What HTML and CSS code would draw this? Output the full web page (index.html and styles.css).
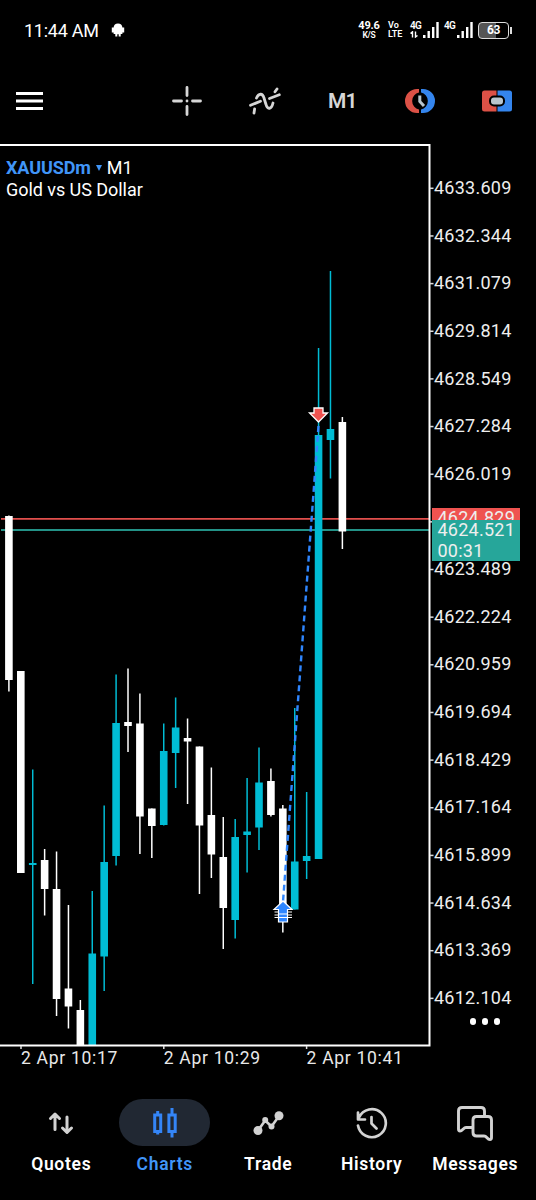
FILE: index.html
```html
<!DOCTYPE html>
<html lang="en">
<head>
  <meta charset="UTF-8">
  <title>Charts</title>
  <link rel="stylesheet" href="styles.css">
</head>
<body>
  <div class="app">
    <header class="status-bar">
      <span class="time">11:44 AM</span>
      <svg class="android" width="14" height="14" viewBox="0 0 14 14" fill="#fff">
        <path d="M2.600 4.500Q3 .5 7 .5T11.400 4.500V11H9.700V13.500H7.700V11.300H6.300V13.500H4.300V11H2.600zM.8 4.500H3V9.500H.8zM11 4.500H13.200V9.500H11z"/>
      </svg>
      <div class="speed"><b>49.6</b><small>K/S</small></div>
      <div class="volte"><span>Vo</span><span>LTE</span></div>
      <div class="network">
        <div class="net-type">
          <span>4G</span>
          <svg width="9" height="7" viewBox="0 0 9 7" fill="none" stroke="#fff" stroke-width="1.4"><path d="M2.500 6.500V.8L.5 2.500M5.500 .5V6L7.500 4.500"/></svg>
        </div>
        <svg width="16" height="16" viewBox="0 0 16 16" fill="#fff"><path d="M0 13h2.500v3H0zM4.500 9h2.400v7H4.500zM9 5h2.400v11H9zM13.300 0h2.400v16h-2.400z"/></svg>
      </div>
      <div class="network second">
        <div class="net-type"><span>4G</span></div>
        <svg width="16" height="16" viewBox="0 0 16 16" fill="#fff"><path d="M0 13h2.500v3H0zM4.500 9h2.400v7H4.500zM9 5h2.400v11H9zM13.300 0h2.400v16h-2.400z"/></svg>
      </div>
      <div class="battery">63</div>
    </header>

    <nav class="toolbar">
      <button class="tool">
        <svg width="28" height="20" viewBox="0 0 28 20" fill="#fff"><path d="M0 1h27v3H0zM0 8.500h27v3H0zM0 16h27v3H0z"/></svg>
      </button>
      <button class="tool">
        <svg width="32" height="32" viewBox="0 0 32 32" fill="none" stroke="#d6d6d6" stroke-width="2.800" stroke-linecap="round"><path d="M16 2.500V10.500M16 21.500v8M2.500 16H10.500M21.500 16h8M16 16h.01"/></svg>
      </button>
      <button class="tool">
        <svg width="34" height="32" viewBox="0 0 34 32" fill="none" stroke="#d6d6d6" stroke-width="2.800" stroke-linecap="round"><path d="M2.500 20.300L12.500 16.200M21.500 13.500L31.300 9.800M6 28l.6-4M8.500 13C10.500 8.500 14.500 7.500 16 13L18 19.500C19.500 25 23.500 24.500 25 18M27 6.800l2-2.800"/></svg>
      </button>
      <button class="tool timeframe">M1</button>
      <button class="tool">
        <svg width="30" height="26" viewBox="0 0 30 26">
          <path d="M14 1H12A12 12 0 0 0 12 25H14V21.500A8.700 8.700 0 0 1 14 4.500z" fill="#dc5146"/>
          <path d="M16 1H18A12 12 0 0 1 18 25H16V21.500A8.700 8.700 0 0 0 16 4.500z" fill="#3485ed"/>
          <path d="M14.800 7.500V13.500L19 18" fill="none" stroke="#b8c5cd" stroke-width="3"/>
        </svg>
      </button>
      <button class="tool">
        <svg width="30" height="22" viewBox="0 0 30 22">
          <path d="M14.500 .5H2.500Q0 .5 0 3V19Q0 21.500 2.500 21.500H14.500z" fill="#dc5146"/>
          <path d="M15.500 .5H27.500Q30 .5 30 3V19Q30 21.500 27.500 21.500H15.500z" fill="#3485ed"/>
          <rect x="8" y="6.500" width="14" height="9" rx="4" fill="#b8c5cd" stroke="#000" stroke-width="2"/>
        </svg>
      </button>
    </nav>

    <main class="chart">
      <div class="plot">
        <svg class="candles" id="candles" width="434" height="907" viewBox="0 143 434 907"></svg>
        <div class="symbol">
          <div><b>XAUUSDm</b><i class="caret"></i>M1</div>
          <div>Gold vs US Dollar</div>
        </div>
        <div class="dates">
          <span>2 Apr 10:17</span>
          <span>2 Apr 10:29</span>
          <span>2 Apr 10:41</span>
        </div>
      </div>
      <div class="prices">
        <div class="scale" id="scale"></div>
        <div class="ask">4624.829</div>
        <div class="bid">4624.521<br>00:31</div>
        <div class="more"><i></i><i></i><i></i></div>
      </div>
    </main>

    <nav class="tabs">
      <a class="tab">
        <span class="icon"><svg width="26" height="24" viewBox="0 0 26 24" fill="none" stroke="#d2d2d2" stroke-width="3" stroke-linecap="round" stroke-linejoin="round"><path d="M7 18.500V3.500M2.500 7.500L7 3l4.500 4.500M19 6v15M14.500 17l4.500 4.500 4.500-4.500"/></svg></span>
        Quotes
      </a>
      <a class="tab active">
        <span class="icon"><svg width="26" height="30" viewBox="0 0 26 30" fill="none" stroke="#3485f7" stroke-width="3"><path d="M2.700 7h6v16.500h-6zM5.700 3v4M5.700 23v3.500M16.900 7h6.300v16.500h-6.300zM20 0v7M20 23v6.500"/></svg></span>
        Charts
      </a>
      <a class="tab">
        <span class="icon"><svg width="32" height="26" viewBox="0 0 32 26" fill="#d2d2d2"><path d="M6 20.500L13.200 10.500L19.500 16.500L27 6" fill="none" stroke="#d2d2d2" stroke-width="2.600"/><circle cx="6" cy="20.500" r="4.500"/><circle cx="13.200" cy="10" r="3"/><circle cx="19.500" cy="16.500" r="3"/><circle cx="27" cy="5.700" r="4.500"/></svg></span>
        Trade
      </a>
      <a class="tab">
        <span class="icon"><svg width="32" height="32" viewBox="0 0 32 32" fill="none" stroke="#d2d2d2" stroke-width="2.700" stroke-linecap="round" stroke-linejoin="round"><path d="M2 18.500A14 14 0 1 0 3 10.500M2 5.500V12.500H9M15.500 10v6.500l5 5"/></svg></span>
        History
      </a>
      <a class="tab">
        <span class="icon"><svg width="38" height="36" viewBox="0 0 38 36" fill="none" stroke="#d2d2d2" stroke-width="2.900" stroke-linejoin="round"><path d="M16 22.500H10C7.500 22.500 6.500 26 4 26Q2.500 26 2.500 24V6Q2.500 2.500 6 2.500H25Q28.500 2.500 28.500 6V11M20.500 11.500H32Q35.500 11.500 35.500 15V32.500Q35.500 34.500 34 34.500C31 34.500 31 31 28 31H20.500Q17 31 17 27.500V15Q17 11.500 20.500 11.500z"/></svg></span>
        Messages
      </a>
    </nav>
  </div>

  <script src="chart.js"></script>
</body>
</html>
```
FILE: styles.css
```css
body {
  margin: 0;
  background: #000;
  color: #fff;
  font-family: Roboto, "Liberation Sans", sans-serif;
}
.app {
  width: 536px;
  height: 1200px;
  overflow: hidden;
  display: flex;
  flex-direction: column;
}
.status-bar {
  height: 60px;
  box-sizing: border-box;
  padding: 0 24px;
  display: flex;
  align-items: center;
}
.time {
  font-size: 18px;
  letter-spacing: -0.25px;
  width: 87px;
  white-space: nowrap;
}
.speed {
  margin-left: auto;
  width: 22px;
  display: flex;
  flex-direction: column;
  align-items: center;
  font-size: 11px;
  line-height: 10px;
}
.speed b {
  letter-spacing: -0.2px;
}
.speed small {
  font-size: 8.5px;
  line-height: 9px;
  font-weight: 600;
  letter-spacing: -0.2px;
}
.volte {
  display: flex;
  flex-direction: column;
  font-size: 9px;
  line-height: 9px;
  font-weight: 600;
  width: 15px;
  margin-left: 8px;
}
.network {
  display: flex;
  height: 16px;
  margin-left: 7px;
}
.network.second {
  margin-left: 5px;
}
.net-type {
  width: 13px;
  font-size: 10px;
  line-height: 8px;
  font-weight: 600;
  letter-spacing: -0.6px;
  display: flex;
  flex-direction: column;
}
.net-type svg {
  margin-top: 1px;
}
.battery {
  position: relative;
  width: 31px;
  height: 17px;
  box-sizing: border-box;
  border: 1.5px solid #ddd;
  border-radius: 4px;
  background: linear-gradient(90deg, #555 60%, #000 60%);
  margin: 0 3px 0 5px;
  font-size: 12px;
  font-weight: bold;
  line-height: 15px;
  letter-spacing: -0.3px;
  text-align: center;
}
.battery::after {
  content: "";
  position: absolute;
  right: -4px;
  top: 4px;
  width: 2px;
  height: 7px;
  background: #ddd;
}
.toolbar {
  height: 83px;
  box-sizing: border-box;
  padding: 0 24px 2px 16px;
  display: grid;
  grid-template-columns: 132.5px repeat(4, 77.5px) 1fr;
  align-items: center;
}
.tool {
  padding: 0;
  border: none;
  background: none;
  display: flex;
  justify-content: center;
}
.tool:first-child {
  justify-content: flex-start;
}
.tool:last-child {
  justify-content: flex-end;
}
.timeframe {
  color: #d6d6d6;
  font: 600 21px Roboto, sans-serif;
  letter-spacing: -1px;
}
.chart {
  height: 935px;
  display: flex;
}
.plot {
  position: relative;
  width: 434px;
}
.candles {
  display: block;
}
.symbol {
  position: absolute;
  left: 6px;
  top: 14px;
  font-size: 18px;
  line-height: 21.5px;
  letter-spacing: -0.05px;
}
.symbol b {
  color: #4095f8;
  letter-spacing: -0.1px;
}
.caret {
  display: inline-block;
  border: 3px solid transparent;
  border-top: 6px solid #4095f8;
  border-bottom: none;
  margin: 0 5px 3px 5px;
}
.dates {
  display: flex;
  padding-left: 21px;
  margin-top: -2px;
  font-size: 17.5px;
  line-height: 20px;
  letter-spacing: 0.7px;
  color: #e8e8e8;
}
.dates span {
  width: 142.8px;
  flex: none;
}
.prices {
  position: relative;
  width: 102px;
  font-size: 18px;
  letter-spacing: 0.25px;
  color: #eee;
}
.scale {
  padding-top: 21px;
}
.price {
  height: 47.65px;
  line-height: 48px;
}
.ask,
.bid {
  position: absolute;
  left: -2px;
  width: 88px;
  box-sizing: border-box;
  padding-left: 5.5px;
}
.ask {
  top: 365px;
  height: 14px;
  line-height: 20px;
  overflow: hidden;
  background: #ef5350;
}
.bid {
  top: 377px;
  height: 41px;
  line-height: 20.5px;
  background: #26a69a;
}
.more {
  position: absolute;
  left: 35.5px;
  top: 875px;
  display: flex;
  gap: 5.5px;
}
.more i {
  width: 6.5px;
  height: 6.5px;
  border-radius: 50%;
  background: #fff;
}
.tabs {
  padding: 21px 9px 0 9.5px;
  display: grid;
  grid-template-columns: repeat(5, 103.5px);
}
.tab {
  display: flex;
  flex-direction: column;
  align-items: center;
  font-size: 17.5px;
  font-weight: 600;
  line-height: 22px;
  letter-spacing: 0.7px;
}
.icon {
  width: 91px;
  height: 47px;
  margin-bottom: 7px;
  border-radius: 24px;
  display: flex;
  align-items: center;
  justify-content: center;
}
.active {
  color: #4095f8;
}
.active .icon {
  background: #212833;
}
```
FILE: chart.js
```javascript
const UP = '#00bcd4';
const DOWN = '#ffffff';

// direction, high, body top, body bottom, low
const candles = [
  ['d', 515.5, 516, 680, 691.5],
  ['d', 671, 671, 873, 873],
  ['u', 769.5, 863, 865, 984],
  ['d', 849, 860, 889, 915.5],
  ['d', 851.5, 889, 999, 1016],
  ['d', 905, 988.5, 1006.5, 1028.5],
  ['d', 1000, 1010, 1046, 1046],
  ['u', 891, 953.5, 1046, 1046],
  ['u', 805.5, 862, 956.5, 991],
  ['u', 674.5, 723, 856, 865.5],
  ['d', 668.5, 722, 726, 752],
  ['d', 693.5, 723.5, 816.5, 854],
  ['d', 808.5, 808.5, 826, 858],
  ['u', 723.5, 751, 825, 825.5],
  ['u', 697.5, 727.5, 753, 788],
  ['d', 718.5, 738, 741.5, 804],
  ['d', 746.5, 746.5, 825.5, 894],
  ['d', 767.5, 815, 854.5, 878],
  ['d', 817, 857, 908, 949],
  ['u', 819, 837, 920, 938.5],
  ['u', 778, 831.5, 835, 872.5],
  ['u', 747.5, 782.5, 827.5, 850],
  ['d', 768.5, 781, 815, 816.5],
  ['d', 805, 808.5, 920, 932.5],
  ['u', 708, 861.5, 909.5, 909.5],
  ['u', 792, 856, 861, 879],
  ['u', 348, 435, 859, 859],
  ['u', 271, 429, 440, 478.5],
  ['d', 417, 422, 531.5, 549]
];

let svg = '';
// ask and bid lines
svg += '<path d="M1 518.8H429" stroke="#e24f4c" stroke-width="1.8"/>';
svg += '<path d="M1 530H429" stroke="#239287" stroke-width="1.8"/>';

candles.forEach(([dir, high, top, bottom, low], i) => {
  const x = 8.9 + i * 11.91;
  const color = dir === 'u' ? UP : DOWN;
  svg += `<path d="M${x} ${high}V${low}" stroke="${color}" stroke-width="1.5"/>`;
  svg += `<rect x="${x - 3.8}" y="${top}" width="7.6" height="${bottom - top}" fill="${color}"/>`;
});

// trade from buy to sell
svg += '<path d="M318.5 426L283 902" stroke="#2f86ff" stroke-width="2.4" stroke-dasharray="6 4"/>';
svg += '<path d="M314 408H323V413H327.5L318.5 422L309.5 413H314z" fill="#ef5350" stroke="#fff" stroke-width="1.3"/>';
svg += '<path d="M274.5 909.5H279M274.5 912H279M274.5 915H279M274.5 917.5H279M287 909.5H292M287 912H292M287 915H292M287 917.5H292" stroke="#fff" stroke-width="1.2"/>';
svg += '<path d="M283 901L292 909.5H287.5V922H278.5V909.5H274z" fill="#2f86ff" stroke="#fff" stroke-width="1.2"/>';
svg += '<path d="M278 914H288M275 917.5H291" stroke="#fff" stroke-width="1.2"/>';

// frame and axis ticks
svg += '<path d="M0 145H429.5V1045.5H0" fill="none" stroke="#fff" stroke-width="2"/>';
for (let i = 0; i < 18; i++) {
  svg += `<path d="M430 ${188.3 + i * 47.65}h3.5" stroke="#ddd" stroke-width="1.5"/>`;
}
[21, 163.8, 306.6].forEach(x => {
  svg += `<path d="M${x} 1046v3" stroke="#ddd" stroke-width="1.5"/>`;
});
document.getElementById('candles').innerHTML = svg;

let scale = '';
for (let i = 0; i < 18; i++) {
  // hidden behind the current price
  const price = i === 7 ? '' : (4633.609 - i * 1.265).toFixed(3);
  scale += `<div class="price">${price}</div>`;
}
document.getElementById('scale').innerHTML = scale;
```
